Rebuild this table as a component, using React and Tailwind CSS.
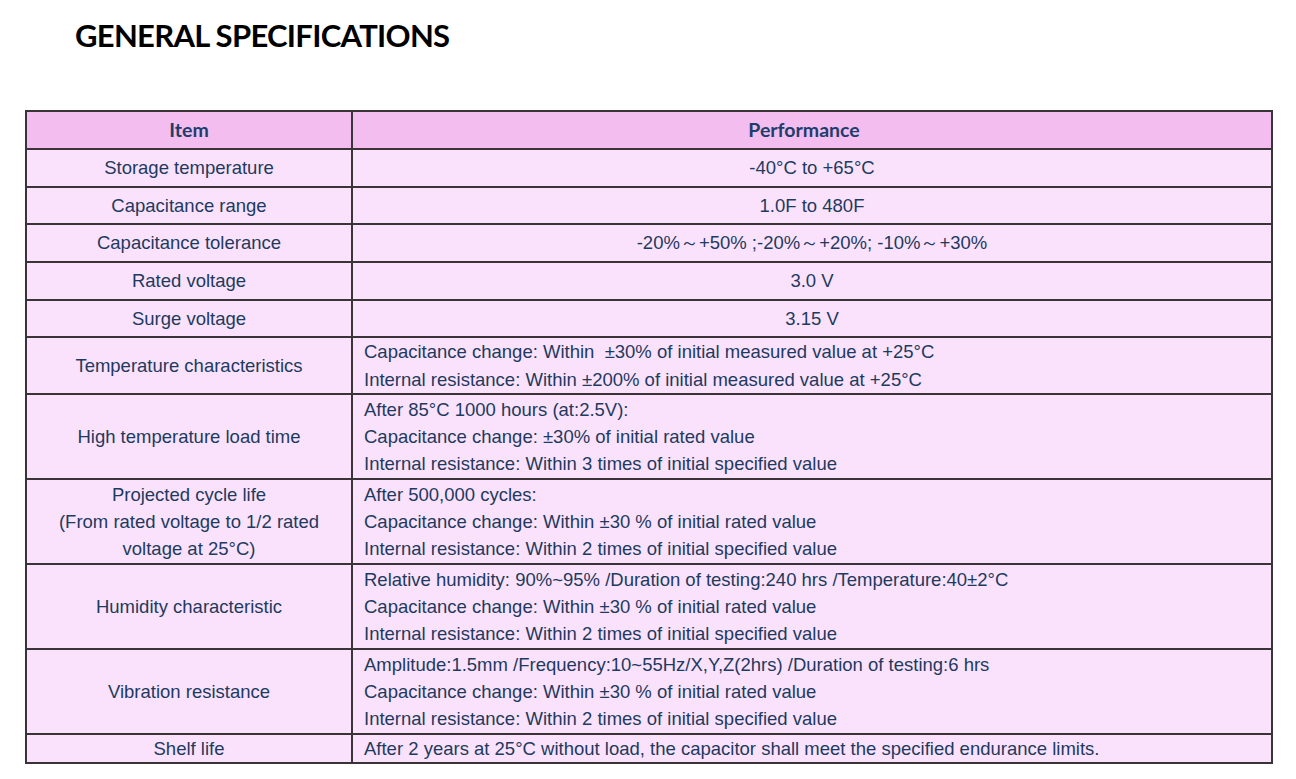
import React from "react";

const rows = [
  { item: ["Storage temperature"], perf: ["-40°C to +65°C"], center: true, h: "h-[38px]" },
  { item: ["Capacitance range"], perf: ["1.0F to 480F"], center: true, h: "h-[37px]" },
  { item: ["Capacitance tolerance"], perf: ["-20%～+50% ;-20%～+20%; -10%～+30%"], center: true, h: "h-[38px]" },
  { item: ["Rated voltage"], perf: ["3.0 V"], center: true, h: "h-[38px]" },
  { item: ["Surge voltage"], perf: ["3.15 V"], center: true, h: "h-[37px]" },
  {
    item: ["Temperature characteristics"],
    perf: [
      "Capacitance change: Within  ±30% of initial measured value at +25°C",
      "Internal resistance: Within ±200% of initial measured value at +25°C",
    ],
    h: "h-[57px]",
  },
  {
    item: ["High temperature load time"],
    perf: [
      "After 85°C 1000 hours (at:2.5V):",
      "Capacitance change: ±30% of initial rated value",
      "Internal resistance: Within 3 times of initial specified value",
    ],
    h: "h-[85px]",
  },
  {
    item: ["Projected cycle life", "(From rated voltage to 1/2 rated", "voltage at 25°C)"],
    perf: [
      "After 500,000 cycles:",
      "Capacitance change: Within ±30 % of initial rated value",
      "Internal resistance: Within 2 times of initial specified value",
    ],
    h: "h-[85px]",
  },
  {
    item: ["Humidity characteristic"],
    perf: [
      "Relative humidity: 90%~95% /Duration of testing:240 hrs /Temperature:40±2°C",
      "Capacitance change: Within ±30 % of initial rated value",
      "Internal resistance: Within 2 times of initial specified value",
    ],
    h: "h-[85px]",
  },
  {
    item: ["Vibration resistance"],
    perf: [
      "Amplitude:1.5mm /Frequency:10~55Hz/X,Y,Z(2hrs) /Duration of testing:6 hrs",
      "Capacitance change: Within ±30 % of initial rated value",
      "Internal resistance: Within 2 times of initial specified value",
    ],
    h: "h-[85px]",
  },
  {
    item: ["Shelf life"],
    perf: ["After 2 years at 25°C without load, the capacitor shall meet the specified endurance limits."],
    h: "h-[29px]",
  },
];

export default function App() {
  return (
    <div className="w-[1296px] h-[779px] bg-white overflow-hidden">
      <h1 className="pl-[75px] pt-[15px] text-[31px] font-bold text-black leading-[40px] tracking-[-0.7px] font-['Lato',sans-serif]">
        GENERAL SPECIFICATIONS
      </h1>
      <table className="ml-[25px] mt-[55px] w-[1248px] border-collapse text-[#1d3a5f] font-['Liberation_Sans',Arial,sans-serif] text-[18.5px] leading-[27.3px]">
        <thead>
          <tr className="h-[38px] bg-[#f4bdef]">
            <th className="w-[326px] border-2 border-[#3a3338] font-bold text-[19.5px] font-['Lato',sans-serif] text-[#1e3d6b]">Item</th>
            <th className="border-2 border-[#3a3338] pr-[16px] font-bold text-[19.5px] font-['Lato',sans-serif] text-[#1e3d6b]">Performance</th>
          </tr>
        </thead>
        <tbody>
          {rows.map((r, i) => (
            <tr key={i} className={`${r.h} bg-[#fbe2fc]`}>
              <td className="border-2 border-[#3a3338] text-center align-middle p-0">
                {r.item.map((t, j) => (
                  <div key={j}>{t}</div>
                ))}
              </td>
              <td className={`border-2 border-[#3a3338] align-middle p-0 ${r.center ? "text-center" : "text-left pl-[11px]"}`}>
                {r.perf.map((t, j) => (
                  <div key={j} className="whitespace-pre">{t}</div>
                ))}
              </td>
            </tr>
          ))}
        </tbody>
      </table>
    </div>
  );
}
